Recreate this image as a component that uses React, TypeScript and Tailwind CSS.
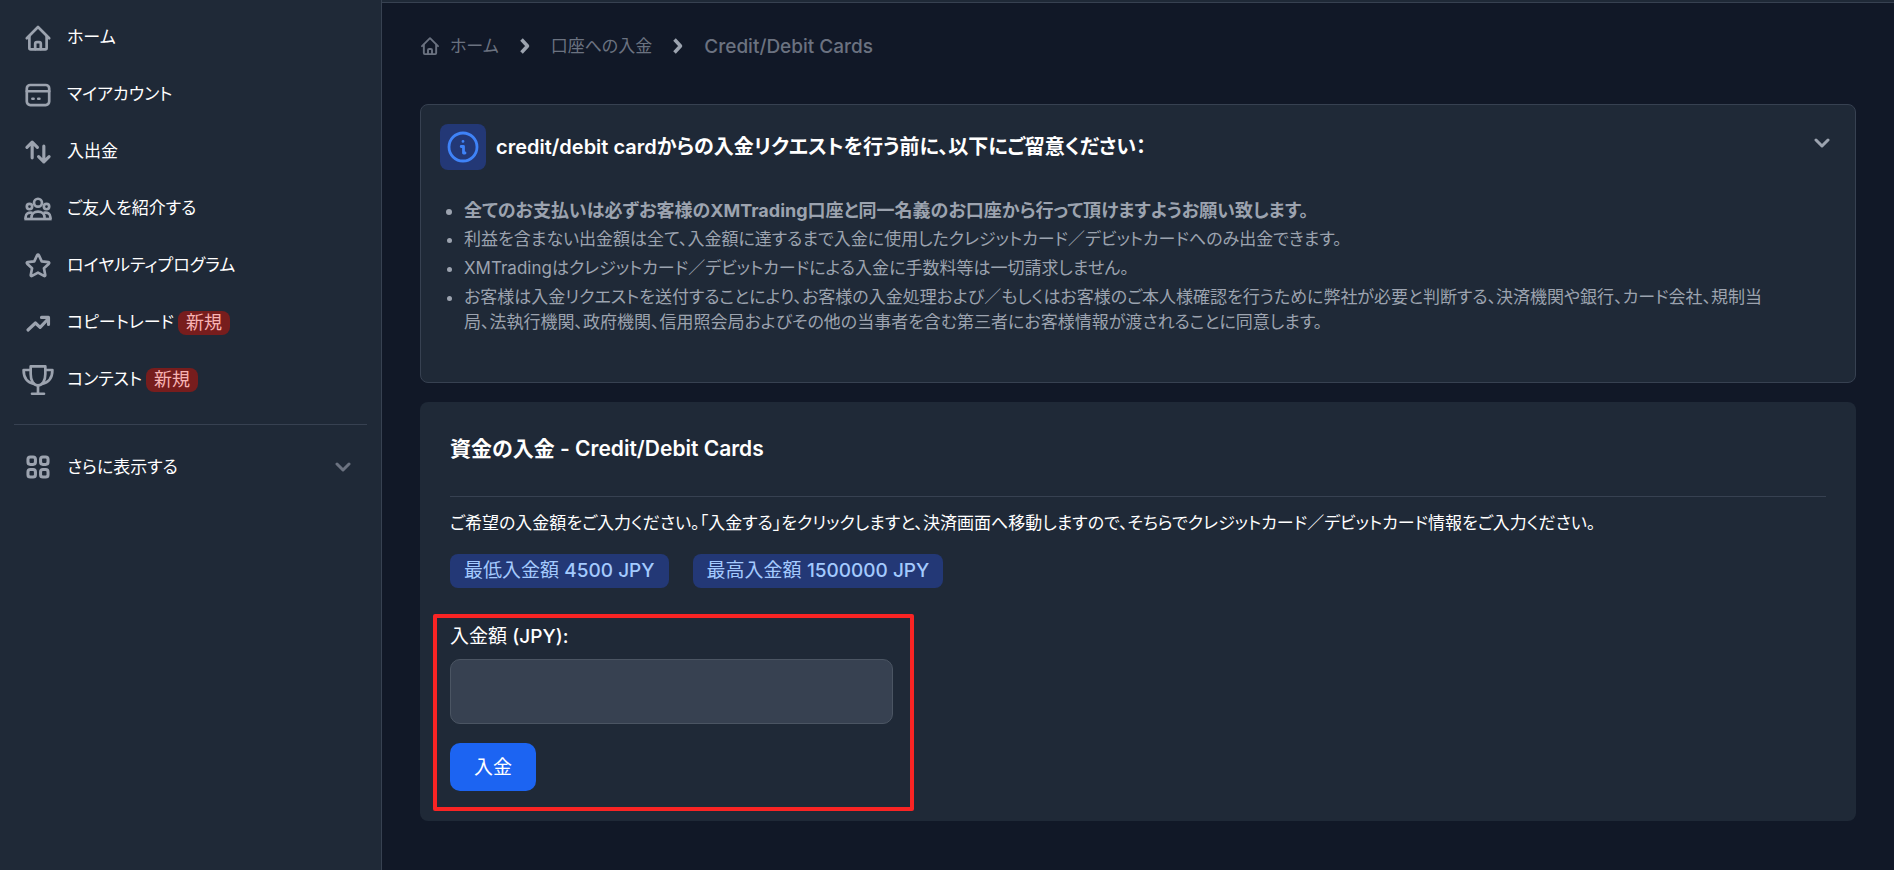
import React from "react";

const iconProps = {
  viewBox: "0 0 24 24",
  fill: "none",
  stroke: "currentColor",
  strokeWidth: 2.3,
  strokeLinecap: "round" as const,
  strokeLinejoin: "round" as const,
};

const HomeIcon = ({ className = "size-7" }) => (
  <svg {...iconProps} className={className}>
    <path d="M2.4 12.2 12 2.6l9.6 9.6" />
    <path d="M4.6 10.5v10c0 .7.5 1.200 1.200 1.200h12.400c.7 0 1.200-.5 1.200-1.200v-10" />
    <path d="M9.600 21.500v-4.600c0-.8.6-1.400 1.400-1.400h2c.8 0 1.400.6 1.400 1.400v4.600" />
  </svg>
);

const CardIcon = () => (
  <svg {...iconProps} className="size-7">
    <rect x="2.400" y="3.400" width="19.200" height="17.200" rx="3" />
    <path d="M2.400 8.800h19.200M7.200 15.200h1M12.200 15.200h1" />
  </svg>
);

const ArrowsIcon = () => (
  <svg {...iconProps} strokeWidth={2.7} className="size-7">
    <path d="M7 17V3.500M2.500 8 7 3.500 11.500 8" />
    <path d="M17 7v13.500M12.500 16l4.500 4.500 4.500-4.500" />
  </svg>
);

const FriendsIcon = () => (
  <svg {...iconProps} strokeLinecap="butt" className="size-7 overflow-visible">
    <circle cx="12" cy="6.600" r="3.400" />
    <circle cx="4.700" cy="9.900" r="2.300" />
    <circle cx="19.300" cy="9.900" r="2.300" />
    <path d="M6.400 20.600v-1.400c0-3 2.300-5 5.600-5s5.600 2 5.600 5v1.400" />
    <path d="M7.200 15.300c-3.400-.8-5.800.8-5.800 3.600v1.700M16.800 15.300c3.400-.8 5.800.8 5.800 3.600v1.700" />
    <path d="M.3 20.600h23.400" />
  </svg>
);

const StarIcon = () => (
  <svg {...iconProps} className="size-7">
    <path d="M11.300 2.700a.8.8 0 0 1 1.400 0l2.500 5.300 5.700.7c.7.1.9.8.4 1.300l-4.200 4 1.100 5.700c.1.700-.5 1.100-1.100.8L12 17.700l-5.100 2.800c-.6.3-1.200-.1-1.100-.8l1.100-5.700-4.200-4c-.5-.5-.3-1.200.4-1.300L8.800 8Z" />
  </svg>
);

const TrendIcon = () => (
  <svg {...iconProps} strokeWidth={2.7} className="size-7">
    <path d="m3.400 18 6.400-6 4 3.800 6.600-7" />
    <path d="M15 7.200h6v6" />
  </svg>
);

const TrophyIcon = () => (
  <svg {...iconProps} strokeWidth={2} className="size-8 shrink-0">
    <path d="M6.500 1.800h11v5.700c0 5-2.200 8.500-5.500 8.500s-5.500-3.500-5.500-8.500Z" />
    <path d="M6.500 4.500H1.200c0 5.500 2.800 9.500 8 10.500M17.500 4.500h5.300c0 5.500-2.800 9.500-8 10.500" />
    <path d="M12 16v6M7.500 22.300h9" />
  </svg>
);

const GridIcon = () => (
  <svg {...iconProps} strokeWidth={2.6} className="size-7">
    <rect x="3.400" y="3.400" width="6.400" height="6.400" rx="2" />
    <rect x="14.200" y="3.400" width="6.400" height="6.400" rx="2" />
    <rect x="3.400" y="14.200" width="6.400" height="6.400" rx="2" />
    <rect x="14.200" y="14.200" width="6.400" height="6.400" rx="2" />
  </svg>
);

const ChevronDown = ({ className = "" }) => (
  <svg {...iconProps} viewBox="0 0 16 16" strokeWidth={3} className={`size-4 ${className}`}>
    <path d="m2 5 6 6 6-6" />
  </svg>
);

const ChevronRight = () => (
  <svg {...iconProps} viewBox="0 0 16 16" strokeWidth={3.5} strokeLinecap="butt" className="size-4 text-[#9ca3af]">
    <path d="m4.500 1.500 6 6.500-6 6.500" />
  </svg>
);

const InfoIcon = () => (
  <svg {...iconProps} viewBox="0 0 32 32" strokeWidth={2.8} className="size-8 text-[#3f83f8]">
    <circle cx="16" cy="16" r="14" />
    <path d="M16 10.300v.1M14.200 15.500H16.500V22h1.500" />
  </svg>
);

const menu = [
  { label: "ホーム", icon: <HomeIcon /> },
  { label: "マイアカウント", icon: <CardIcon /> },
  { label: "入出金", icon: <ArrowsIcon /> },
  { label: "ご友人を紹介する", icon: <FriendsIcon /> },
  { label: "ロイヤルティプログラム", icon: <StarIcon /> },
  { label: "コピートレード", icon: <TrendIcon />, isNew: true },
  { label: "コンテスト", icon: <TrophyIcon />, isNew: true },
];

const notes = [
  "利益を含まない出金額は全て、入金額に達するまで入金に使用したクレジットカード／デビットカードへのみ出金できます。",
  "XMTradingはクレジットカード／デビットカードによる入金に手数料等は一切請求しません。",
  "お客様は入金リクエストを送付することにより、お客様の入金処理および／もしくはお客様のご本人様確認を行うために弊社が必要と判断する、決済機関や銀行、カード会社、規制当局、法執行機関、政府機関、信用照会局およびその他の当事者を含む第三者にお客様情報が渡されることに同意します。",
];

const Sidebar = () => (
  <aside className="w-[382px] shrink-0 border-r border-[#374151] bg-[#1f2937] px-3.5 pt-[9px] text-[17px]">
    <nav>
      <ul>
        {menu.map((item) => (
          <li key={item.label}>
            <a href="#" className="flex h-[57px] items-center px-2.5 text-white">
              <span className="flex w-7 shrink-0 justify-center text-[#9ca3af]">
                {item.icon}
              </span>
              <span className="ml-[15px]">{item.label}</span>
              {item.isNew && (
                <span className="ml-1 rounded-lg bg-[#771d1d] px-2 text-[18px] leading-6 text-[#f8b4b4]">
                  新規
                </span>
              )}
            </a>
          </li>
        ))}
      </ul>
      <button
        type="button"
        className="mt-4 flex w-full items-center border-t border-[#374151] px-2.5 pt-7 text-white"
      >
        <span className="w-7 text-[#9ca3af]">
          <GridIcon />
        </span>
        <span className="ml-[15px]">さらに表示する</span>
        <ChevronDown className="mr-1.5 ml-auto text-[#6b7280]" />
      </button>
    </nav>
  </aside>
);

const Breadcrumb = () => (
  <nav aria-label="Breadcrumb" className="flex h-7 items-center gap-[18px] text-[17px] text-[#6b7280]">
    <a href="#" className="flex items-center gap-2.5">
      <HomeIcon className="size-5" />
      ホーム
    </a>
    <ChevronRight />
    <a href="#">口座への入金</a>
    <ChevronRight />
    <span className="text-[19px] font-medium">Credit/Debit Cards</span>
  </nav>
);

export default function App() {
  return (
    <div
      className="flex min-h-screen bg-[#111827] font-['Inter','Noto_Sans_CJK_JP',sans-serif] text-[17px] leading-[25px] [font-feature-settings:'palt']"
      lang="ja"
    >
      <Sidebar />

      <div className="flex min-w-0 flex-1 flex-col">
        <div className="h-[3px] border-b border-[#374151] bg-[#1f2937]"></div>

        <main className="px-[38px] pt-[29px]">
          <Breadcrumb />

          {/* Notice */}
          <section className="mt-11 rounded-lg border border-[#374151] bg-[#1f2937] px-[19px] pt-[19px] pb-[47px]">
            <div className="flex items-center">
              <span className="flex size-[46px] items-center justify-center rounded-lg bg-[#233876]">
                <InfoIcon />
              </span>
              <h2 className="ml-2.5 text-[20px] font-semibold text-white">
                credit/debit cardからの入金リクエストを行う前に、以下にご留意ください：
              </h2>
              <button type="button" aria-label="閉じる" className="mr-1.5 mb-2 ml-auto text-[#9ca3af]">
                <ChevronDown />
              </button>
            </div>
            <ul className="mt-7 list-disc space-y-1 pr-16 pl-6 text-[#9ca3af]">
              <li className="text-[18px] font-bold">
                全てのお支払いは必ずお客様のXMTrading口座と同一名義のお口座から行って頂けますようお願い致します。
              </li>
              {notes.map((note) => (
                <li key={note}>{note}</li>
              ))}
            </ul>
          </section>

          {/* Deposit form */}
          <section className="mt-[19px] rounded-lg bg-[#1f2937] px-[30px] pt-[34px] pb-2.5 text-white">
            <h1 className="border-b border-[#374151] pb-[34px] text-[21px] leading-[26px] font-semibold">
              資金の入金 - Credit/Debit Cards
            </h1>
            <p className="mt-3.5">
              ご希望の入金額をご入力ください。「入金する」をクリックしますと、決済画面へ移動しますので、そちらでクレジットカード／デビットカード情報をご入力ください。
            </p>
            <div className="mt-[18px] flex gap-6 text-[19px] text-[#a4cafe]">
              <span className="rounded-lg bg-[#233876] px-3.5 leading-[34px]">
                最低入金額 <span className="font-medium">4500 JPY</span>
              </span>
              <span className="rounded-lg bg-[#233876] px-3.5 leading-[34px]">
                最高入金額 <span className="font-medium">1500000 JPY</span>
              </span>
            </div>
            <form className="mt-[26px] -ml-[17px] w-[481px] rounded-xs border-4 border-[#f92424] px-[13px] pt-1.5 pb-4 text-[19px]">
              <label htmlFor="amount" className="block">
                入金額 <span className="font-medium">(JPY):</span>
              </label>
              <input
                id="amount"
                type="text"
                className="mt-2.5 block h-[65px] w-[443px] rounded-[10px] border border-[#4b5563] bg-[#374151] px-4"
              />
              <button
                type="button"
                className="mt-[19px] h-12 rounded-[10px] bg-[#1c64f2] px-6"
              >
                入金
              </button>
            </form>
          </section>
        </main>
      </div>
    </div>
  );
}
